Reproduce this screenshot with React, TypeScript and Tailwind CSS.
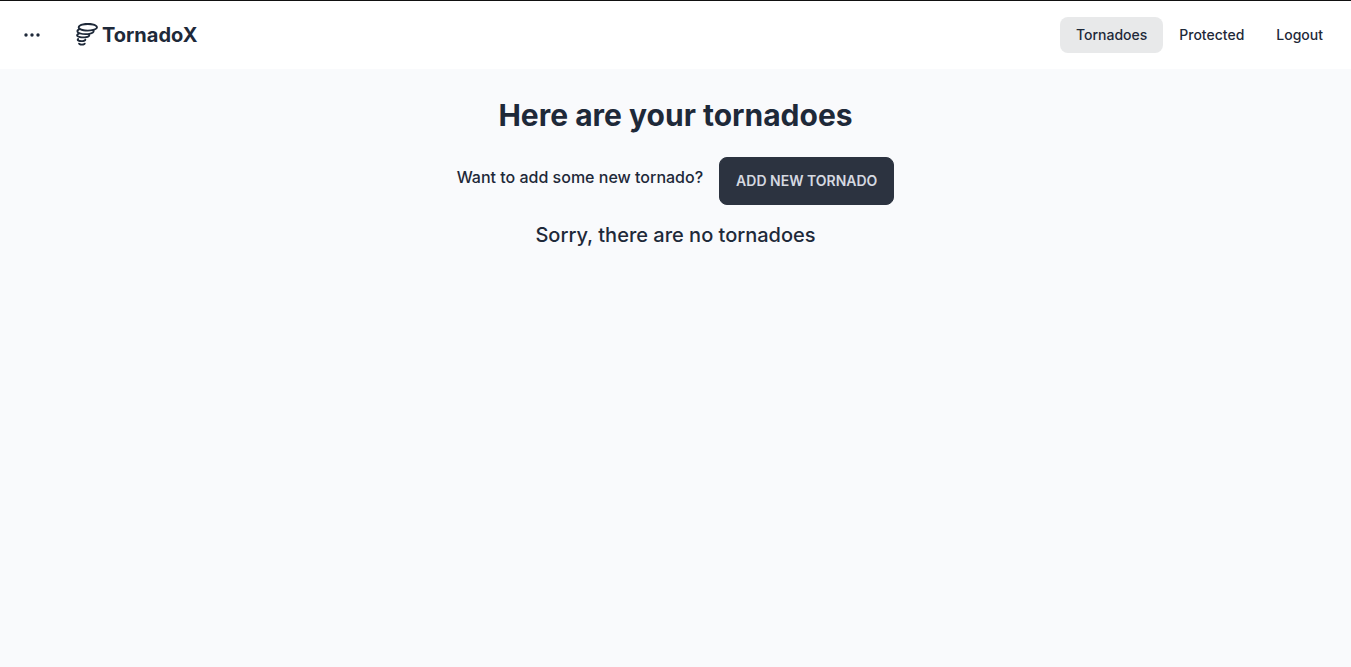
import { WiTornado } from "react-icons/wi";

const navItems = [
  { label: "Tornadoes", active: true },
  { label: "Protected", active: false },
  { label: "Logout", active: false },
];

function DotsIcon() {
  return (
    <svg className="size-5" viewBox="0 0 20 20" fill="currentColor" aria-hidden="true">
      <circle cx="4" cy="10" r="1.7" />
      <circle cx="10" cy="10" r="1.7" />
      <circle cx="16" cy="10" r="1.7" />
    </svg>
  );
}

export default function App() {
  return (
    <div className="flex min-h-screen flex-col border-t border-[#111] bg-[#f9fafc] font-['Inter',sans-serif] font-medium text-gray-800">
      <header className="flex items-center justify-between bg-white px-3 py-4">
        <div className="flex items-center gap-7">
          <button type="button" aria-label="Open menu" className="flex h-9 w-8 items-center justify-center pl-2">
            <DotsIcon />
          </button>
          <a href="#" className="flex items-center text-xl font-bold">
            <WiTornado className="size-[30px]" aria-hidden="true" />
            TornadoX
          </a>
        </div>
        <nav className="flex">
          {navItems.map((item) => (
            <a
              key={item.label}
              href="#"
              aria-current={item.active ? "page" : undefined}
              className={
                item.active
                  ? "rounded-lg bg-[#e8e9ea] px-4 py-2 text-sm"
                  : "rounded-lg px-4 py-2 text-sm"
              }
            >
              {item.label}
            </a>
          ))}
        </nav>
      </header>
      <main className="flex flex-col items-center px-4 pt-7">
        <h1 className="text-3xl font-bold">Here are your tornadoes</h1>
        <div className="mt-6 flex items-start gap-4">
          <p className="pt-2">Want to add some new tornado?</p>
          <button
            type="button"
            className="h-12 rounded-lg border border-[#2c3340] bg-[#2c3340] px-4 text-sm font-semibold text-[#d5d9e0] uppercase"
          >
            Add new tornado
          </button>
        </div>
        <p className="mt-4 text-xl">Sorry, there are no tornadoes</p>
      </main>
    </div>
  );
}
